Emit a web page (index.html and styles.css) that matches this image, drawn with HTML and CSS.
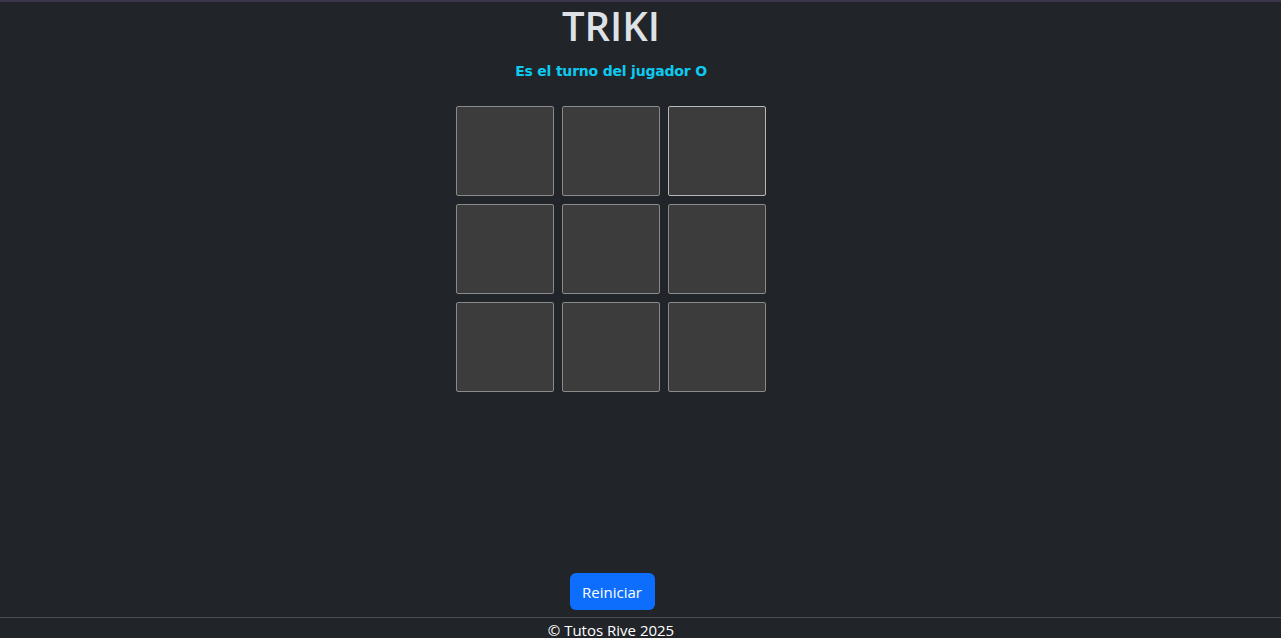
FILE: index.html
```html
<!DOCTYPE html>
<html lang="es">
<head>
<meta charset="utf-8">
<title>TRIKI</title>
<link rel="stylesheet" href="styles.css">
</head>
<body>
<div class="app">
  <main class="page">
    <h1 class="title">TRIKI</h1>
    <p class="status">Es el turno del jugador O</p>
    <div class="board">
      <div class="cell"></div>
      <div class="cell"></div>
      <div class="cell cell-hover"></div>
      <div class="cell"></div>
      <div class="cell"></div>
      <div class="cell"></div>
      <div class="cell"></div>
      <div class="cell"></div>
      <div class="cell"></div>
    </div>
    <div class="spacer"></div>
    <button class="btn-reset">Reiniciar</button>
  </main>
  <footer class="footer">
    <div class="footer-inner">© Tutos Rive 2025</div>
  </footer>
</div>
</body>
</html>
```
FILE: styles.css
```css
html, body {
  margin: 0;
  padding: 0;
  background: #212529;
  color: #dee2e6;
  font-family: "Open Sans", "Noto Sans", sans-serif;
}
body {
  border-top: 2px solid #3b3649;
}
.app {
  display: flex;
  flex-direction: column;
}
.page {
  width: 1222px;
  height: 615px;
  display: flex;
  flex-direction: column;
  align-items: center;
}
.title {
  margin: 0;
  font-size: 40px;
  font-weight: 600;
  line-height: 48px;
  color: #dee2e6;
}
.status {
  margin: 9px 0 0;
  font-family: "DejaVu Sans", sans-serif;
  font-weight: bold;
  font-size: 14px;
  line-height: 24px;
  letter-spacing: -0.2px;
  color: #0dcaf0;
}
.board {
  margin-top: 23px;
  display: grid;
  grid-template-columns: repeat(3, 98px);
  grid-auto-rows: 90px;
  gap: 8px;
}
.cell {
  box-sizing: border-box;
  background: #3c3c3c;
  border: 1px solid #8a8a8a;
  border-radius: 2px;
}
.cell-hover {
  border-color: #b8b8b8;
}
.spacer {
  flex: 1;
}
.btn-reset {
  margin-bottom: 7px;
  margin-left: 2px;
  width: 85px;
  height: 37px;
  background: #0d6efd;
  color: #fff;
  border: none;
  border-radius: 6px;
  font-family: "Open Sans", "Noto Sans", sans-serif;
  font-size: 15px;
  padding: 0;
}
.footer {
  border-top: 1px solid #4a4f55;
}
.footer-inner {
  width: 1222px;
  text-align: center;
  font-size: 15px;
  line-height: 24px;
  color: #ffffff;
}
```
